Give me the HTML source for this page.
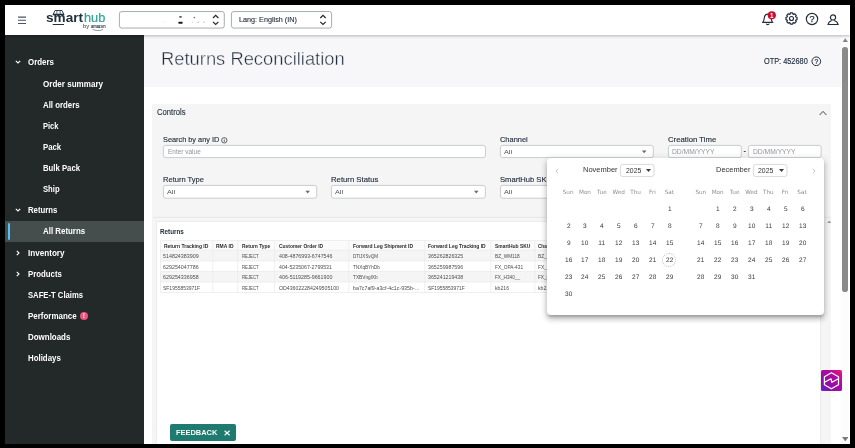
<!DOCTYPE html>
<html lang="en">
<head>
<meta charset="utf-8">
<title>Returns Reconciliation</title>
<style>
*{box-sizing:border-box;margin:0;padding:0}
html,body{width:855px;height:448px;overflow:hidden;background:#000}
body{font-family:"Liberation Sans",sans-serif;color:#232f3e;position:relative}
.a{position:absolute}
.t{position:absolute;white-space:nowrap;line-height:12px;height:12px}
#app{left:0;top:0;width:855px;height:448px;background:#fff;overflow:hidden;filter:opacity(1)}
#hdr{left:5px;top:5px;width:845px;height:29.5px;background:#fff;box-shadow:0 1px 3px rgba(0,0,0,.28);z-index:20}
#side{left:5px;top:34px;width:138.8px;height:410px;background:#232829}
#selrow{left:5px;top:221px;width:139px;height:21px;background:#454d4d}
#selbar{left:7.5px;top:223px;width:2.2px;height:17px;background:#4fc3f7;border-radius:1px}
#band{left:144px;top:34px;width:697px;height:53px;background:#f7f7f9}
#ctl{left:152px;top:104px;width:679.2px;height:341px;background:#f5f5f5}
#ret{left:156px;top:221px;width:665.3px;height:230px;background:#fff;border:1px solid #ececec}
#pop{left:547px;top:158px;width:277px;height:156.5px;background:#fff;border-radius:4px;box-shadow:0 2.6px 2.6px -1.6px rgba(0,0,0,.2),0 4.2px 5.3px .5px rgba(0,0,0,.14),0 1.6px 7.4px 1px rgba(0,0,0,.12);z-index:10}
.dh{position:absolute;width:17px;text-align:center;font-size:5.7px;color:#8e8e8e;line-height:8px;height:8px;font-family:"DejaVu Sans","Liberation Sans",sans-serif}
.d{position:absolute;width:17px;text-align:center;font-size:6.5px;color:#3a3a3a;line-height:8px;height:8px;letter-spacing:.15px;transform:translate(.35px,0) rotate(.03deg)}
.fr{position:absolute;background:#000;z-index:100}
</style>
</head>
<body>
<div id="app" class="a">
<div id="side" class="a"></div>
<div id="selrow" class="a"></div><div id="selbar" class="a"></div>
<div class="t" style="left:28.3px;top:56.40px;font-size:8.5px;font-weight:bold;transform:scaleX(0.929);transform-origin:0 50%;color:#fff">Orders</div>
<svg class="a" style="left:14.5px;top:59.4px" width="6" height="6" viewBox="0 0 6 6"><path d="M0.8 1.8 L3 4 L5.2 1.8" fill="none" stroke="#fff" stroke-width="1.1"/></svg>
<div class="t" style="left:43.1px;top:77.50px;font-size:8.5px;font-weight:bold;transform:scaleX(0.948);transform-origin:0 50%;color:#fff">Order summary</div>
<div class="t" style="left:43.1px;top:98.50px;font-size:8.5px;font-weight:bold;transform:scaleX(0.922);transform-origin:0 50%;color:#fff">All orders</div>
<div class="t" style="left:43.1px;top:119.50px;font-size:8.5px;font-weight:bold;transform:scaleX(0.881);transform-origin:0 50%;color:#fff">Pick</div>
<div class="t" style="left:42.9px;top:140.60px;font-size:8.5px;font-weight:bold;transform:scaleX(0.917);transform-origin:0 50%;color:#fff">Pack</div>
<div class="t" style="left:42.9px;top:161.70px;font-size:8.5px;font-weight:bold;transform:scaleX(0.911);transform-origin:0 50%;color:#fff">Bulk Pack</div>
<div class="t" style="left:42.9px;top:182.80px;font-size:8.5px;font-weight:bold;transform:scaleX(0.901);transform-origin:0 50%;color:#fff">Ship</div>
<div class="t" style="left:28.2px;top:203.90px;font-size:8.5px;font-weight:bold;transform:scaleX(0.915);transform-origin:0 50%;color:#fff">Returns</div>
<svg class="a" style="left:14.5px;top:206.9px" width="6" height="6" viewBox="0 0 6 6"><path d="M0.8 1.8 L3 4 L5.2 1.8" fill="none" stroke="#fff" stroke-width="1.1"/></svg>
<div class="t" style="left:42.9px;top:225.20px;font-size:8.5px;font-weight:bold;transform:scaleX(0.929);transform-origin:0 50%;color:#fff">All Returns</div>
<div class="t" style="left:28.2px;top:246.70px;font-size:8.5px;font-weight:bold;transform:scaleX(0.954);transform-origin:0 50%;color:#fff">Inventory</div>
<svg class="a" style="left:15px;top:249.7px" width="6" height="6" viewBox="0 0 6 6"><path d="M1.8 0.8 L4 3 L1.8 5.2" fill="none" stroke="#fff" stroke-width="1.1"/></svg>
<div class="t" style="left:28.2px;top:267.80px;font-size:8.5px;font-weight:bold;transform:scaleX(0.920);transform-origin:0 50%;color:#fff">Products</div>
<svg class="a" style="left:15px;top:270.8px" width="6" height="6" viewBox="0 0 6 6"><path d="M1.8 0.8 L4 3 L1.8 5.2" fill="none" stroke="#fff" stroke-width="1.1"/></svg>
<div class="t" style="left:28.1px;top:289.00px;font-size:8.5px;font-weight:bold;transform:scaleX(0.903);transform-origin:0 50%;color:#fff">SAFE-T Claims</div>
<div class="t" style="left:28.2px;top:309.50px;font-size:8.5px;font-weight:bold;transform:scaleX(0.937);transform-origin:0 50%;color:#fff">Performance</div>
<div class="a" style="left:79.8px;top:311.6px;width:8.2px;height:8.2px;border-radius:50%;background:#f0527a;color:#fff;font-size:6.5px;font-weight:bold;line-height:8.2px;text-align:center">!</div>
<div class="t" style="left:28.2px;top:330.60px;font-size:8.5px;font-weight:bold;transform:scaleX(0.935);transform-origin:0 50%;color:#fff">Downloads</div>
<div class="t" style="left:28.2px;top:351.70px;font-size:8.5px;font-weight:bold;transform:scaleX(0.926);transform-origin:0 50%;color:#fff">Holidays</div>
<div id="band" class="a"></div>
<div class="t" style="left:160.7px;top:46.50px;font-size:18px;transform:scaleX(1.020);transform-origin:0 50%;color:#232f3e;-webkit-text-stroke:0.4px #f7f7f9;line-height:24px;height:24px">Returns Reconciliation</div>
<div class="t" style="left:764.2px;top:55.00px;font-size:8.7px;transform:scaleX(0.846);transform-origin:0 50%;color:#232f3e;-webkit-text-stroke:0.15px #232f3e">OTP: 452680</div>
<svg class="a" style="left:811.3px;top:55.5px" width="10.6" height="10.6" viewBox="0 0 10.6 10.6"><circle cx="5.3" cy="5.3" r="4.35" fill="none" stroke="#232f3e" stroke-width="1"/><text x="5.3" y="7.7" font-size="6.8" text-anchor="middle" fill="#232f3e" stroke="#232f3e" stroke-width="0.2" font-family="Liberation Sans, sans-serif">?</text></svg>
<div id="ctl" class="a"></div>
<div class="t" style="left:156.8px;top:106.80px;font-size:8.2px;transform:scaleX(0.937);transform-origin:0 50%;color:#232f3e;-webkit-text-stroke:0.1px #232f3e">Controls</div>
<svg class="a" style="left:819.2px;top:110.2px" width="8" height="6" viewBox="0 0 8 6"><path d="M0.6 5 L4 1.4 L7.4 5" fill="none" stroke="#333" stroke-width="0.9"/></svg>
<div class="t" style="left:163.2px;top:134.10px;font-size:8px;transform:scaleX(0.917);transform-origin:0 50%;color:#232f3e;-webkit-text-stroke:0.14px #232f3e">Search by any ID</div>
<svg class="a" style="left:221.1px;top:137.1px" width="6.6" height="6.6" viewBox="0 0 6.6 6.6"><circle cx="3.3" cy="3.3" r="2.7" fill="none" stroke="#333" stroke-width="0.75"/><path d="M3.3 2.9 V4.8" stroke="#333" stroke-width="0.8"/><circle cx="3.3" cy="1.9" r="0.45" fill="#333"/></svg>
<svg class="a" style="left:161.7px;top:144px;" width="324.9" height="15.0" viewBox="0 0 324.9 15.0"><rect x="1.4" y="1.4" width="322.1" height="12.2" rx="2.2" fill="#fff" stroke="#bcc1c5" stroke-width="0.8"/></svg>
<div class="t" style="left:167.6px;top:145.80px;font-size:6.7px;transform:scaleX(0.968);transform-origin:0 50%;color:#8f969e">Enter value</div>
<div class="t" style="left:500.4px;top:134.10px;font-size:8px;transform:scaleX(0.929);transform-origin:0 50%;color:#232f3e;-webkit-text-stroke:0.14px #232f3e">Channel</div>
<svg class="a" style="left:498.8px;top:144px;" width="155.7" height="15.0" viewBox="0 0 155.7 15.0"><rect x="1.4" y="1.4" width="152.9" height="12.2" rx="2.2" fill="#fff" stroke="#bcc1c5" stroke-width="0.8"/><path d="M142.9 6.4 H147.5 L145.2 9.2Z" fill="#6a6a6a"/></svg>
<div class="t" style="left:504.3px;top:145.80px;font-size:6.1px;transform:scaleX(1.195);transform-origin:0 50%;color:#4a4f55">All</div>
<div class="t" style="left:668px;top:134.10px;font-size:8px;transform:scaleX(0.968);transform-origin:0 50%;color:#232f3e;-webkit-text-stroke:0.14px #232f3e">Creation Time</div>
<svg class="a" style="left:666.8px;top:144px;" width="75.7" height="15.0" viewBox="0 0 75.7 15.0"><rect x="1.4" y="1.4" width="72.9" height="12.2" rx="2.2" fill="#fff" stroke="#bcc1c5" stroke-width="0.8"/></svg>
<div class="t" style="left:672.4px;top:145.80px;font-size:6.6px;transform:scaleX(1.019);transform-origin:0 50%;color:#8f969e">DD/MM/YYYY</div>
<div class="t " style="left:743.5px;top:144.90px;font-size:7.5px;font-weight:bold;color:#333">-</div>
<svg class="a" style="left:747.4px;top:144px;" width="75.5" height="15.0" viewBox="0 0 75.5 15.0"><rect x="1.4" y="1.4" width="72.7" height="12.2" rx="2.2" fill="#fff" stroke="#bcc1c5" stroke-width="0.8"/></svg>
<div class="t" style="left:753px;top:145.80px;font-size:6.6px;transform:scaleX(1.019);transform-origin:0 50%;color:#8f969e">DD/MM/YYYY</div>
<div class="t" style="left:163.2px;top:174.40px;font-size:8px;transform:scaleX(0.942);transform-origin:0 50%;color:#232f3e;-webkit-text-stroke:0.14px #232f3e">Return Type</div>
<svg class="a" style="left:161.7px;top:184px;" width="156.2" height="15.6" viewBox="0 0 156.2 15.6"><rect x="1.4" y="1.4" width="153.4" height="12.8" rx="2.2" fill="#fff" stroke="#bcc1c5" stroke-width="0.8"/><path d="M143.4 6.7 H148.0 L145.7 9.5Z" fill="#6a6a6a"/></svg>
<div class="t" style="left:167px;top:186.40px;font-size:6.1px;transform:scaleX(1.195);transform-origin:0 50%;color:#4a4f55">All</div>
<div class="t" style="left:331.4px;top:174.40px;font-size:8px;transform:scaleX(0.967);transform-origin:0 50%;color:#232f3e;-webkit-text-stroke:0.14px #232f3e">Return Status</div>
<svg class="a" style="left:329.8px;top:184px;" width="156.8" height="15.6" viewBox="0 0 156.8 15.6"><rect x="1.4" y="1.4" width="154.0" height="12.8" rx="2.2" fill="#fff" stroke="#bcc1c5" stroke-width="0.8"/><path d="M144.0 6.7 H148.6 L146.3 9.5Z" fill="#6a6a6a"/></svg>
<div class="t" style="left:335.2px;top:186.40px;font-size:6.1px;transform:scaleX(1.195);transform-origin:0 50%;color:#4a4f55">All</div>
<div class="t" style="left:500.4px;top:174.40px;font-size:8px;transform:scaleX(0.951);transform-origin:0 50%;color:#232f3e;-webkit-text-stroke:0.14px #232f3e">SmartHub SKU</div>
<svg class="a" style="left:498.8px;top:184px;" width="155.7" height="15.6" viewBox="0 0 155.7 15.6"><rect x="1.4" y="1.4" width="152.9" height="12.8" rx="2.2" fill="#fff" stroke="#bcc1c5" stroke-width="0.8"/><path d="M142.9 6.7 H147.5 L145.2 9.5Z" fill="#6a6a6a"/></svg>
<div class="t" style="left:504.3px;top:186.40px;font-size:6.1px;transform:scaleX(1.195);transform-origin:0 50%;color:#4a4f55">All</div>
<svg class="a" style="left:152.6px;top:216px" width="678.6" height="3" viewBox="0 0 678.6 3"><path d="M0 1.4 H678.6" stroke="#e4e4e4" stroke-width="0.8"/></svg>
<div id="ret" class="a"></div>
<div class="t" style="left:160px;top:225.50px;font-size:6.6px;font-weight:bold;transform:scaleX(0.958);transform-origin:0 50%;color:#232f3e">Returns</div>
<svg class="a" style="left:826.5px;top:219.5px" width="4.4" height="3.4" viewBox="0 0 4.4 3.4"><path d="M0 3.4 L2.2 0.4 L4.4 3.4Z" fill="#9a9a9a"/></svg>
<svg class="a" style="left:159.8px;top:240.4px" width="440.7" height="53.0" viewBox="0 0 440.7 53.0"><rect x="0.5" y="0.5" width="439.7" height="9.8" fill="#fbfbfb"/><rect x="0.5" y="10.3" width="439.7" height="10.6" fill="#f5f5f5"/><rect x="0.5" y="31.5" width="439.7" height="10.5" fill="#f5f5f5"/><path d="M0.5 0.5 H440.2" stroke="#ebebeb" stroke-width="0.8"/><path d="M0.5 10.3 H440.2" stroke="#ebebeb" stroke-width="0.8"/><path d="M0.5 20.9 H440.2" stroke="#ebebeb" stroke-width="0.8"/><path d="M0.5 31.5 H440.2" stroke="#ebebeb" stroke-width="0.8"/><path d="M0.5 42.0 H440.2" stroke="#ebebeb" stroke-width="0.8"/><path d="M0.5 52.5 H440.2" stroke="#ebebeb" stroke-width="0.8"/><path d="M0.5 0.5 V52.5" stroke="#ebebeb" stroke-width="0.8"/><path d="M52.8 0.5 V52.5" stroke="#ebebeb" stroke-width="0.8"/><path d="M77.7 0.5 V52.5" stroke="#ebebeb" stroke-width="0.8"/><path d="M114.6 0.5 V52.5" stroke="#ebebeb" stroke-width="0.8"/><path d="M188.8 0.5 V52.5" stroke="#ebebeb" stroke-width="0.8"/><path d="M264.7 0.5 V52.5" stroke="#ebebeb" stroke-width="0.8"/><path d="M330.9 0.5 V52.5" stroke="#ebebeb" stroke-width="0.8"/><path d="M374.9 0.5 V52.5" stroke="#ebebeb" stroke-width="0.8"/><path d="M440.2 0.5 V52.5" stroke="#ebebeb" stroke-width="0.8"/></svg>
<div class="t" style="left:163.8px;top:239.80px;font-size:5.4px;font-weight:bold;transform:scaleX(0.925);transform-origin:0 50%;color:#2b2b2b">Return Tracking ID</div>
<div class="t" style="left:215.8px;top:239.80px;font-size:5.4px;font-weight:bold;transform:scaleX(0.921);transform-origin:0 50%;color:#2b2b2b">RMA ID</div>
<div class="t" style="left:241.7px;top:239.80px;font-size:5.4px;font-weight:bold;transform:scaleX(0.913);transform-origin:0 50%;color:#2b2b2b">Return Type</div>
<div class="t" style="left:278.8px;top:239.80px;font-size:5.4px;font-weight:bold;transform:scaleX(0.915);transform-origin:0 50%;color:#2b2b2b">Customer Order ID</div>
<div class="t" style="left:352.9px;top:239.80px;font-size:5.4px;font-weight:bold;transform:scaleX(0.920);transform-origin:0 50%;color:#2b2b2b">Forward Leg Shipment ID</div>
<div class="t" style="left:428.2px;top:239.80px;font-size:5.4px;font-weight:bold;transform:scaleX(0.917);transform-origin:0 50%;color:#2b2b2b">Forward Leg Tracking ID</div>
<div class="t" style="left:494.5px;top:239.80px;font-size:5.4px;font-weight:bold;transform:scaleX(0.917);transform-origin:0 50%;color:#2b2b2b">SmartHub SKU</div>
<div class="t" style="left:538.2px;top:239.80px;font-size:5.4px;font-weight:bold;transform:scaleX(0.857);transform-origin:0 50%;color:#2b2b2b">Channel SKU</div>
<div class="t" style="left:163.4px;top:250.10px;font-size:5.4px;transform:scaleX(0.991);transform-origin:0 50%;color:#4d4d4d">514824383909</div>
<div class="t" style="left:241.7px;top:250.10px;font-size:5.4px;transform:scaleX(0.795);transform-origin:0 50%;color:#4d4d4d">REJECT</div>
<div class="t" style="left:278.8px;top:250.10px;font-size:5.4px;transform:scaleX(0.979);transform-origin:0 50%;color:#4d4d4d">408-4876993-6747546</div>
<div class="t" style="left:352.9px;top:250.10px;font-size:5.4px;transform:scaleX(0.845);transform-origin:0 50%;color:#4d4d4d">DTlJXSvQM</div>
<div class="t" style="left:428.2px;top:250.10px;font-size:5.4px;transform:scaleX(0.977);transform-origin:0 50%;color:#4d4d4d">365262826325</div>
<div class="t" style="left:494.5px;top:250.10px;font-size:5.4px;transform:scaleX(0.879);transform-origin:0 50%;color:#4d4d4d">BZ_WM118</div>
<div class="t" style="left:538.2px;top:250.10px;font-size:5.4px;transform:scaleX(0.879);transform-origin:0 50%;color:#4d4d4d">BZ_WM118</div>
<div class="t" style="left:163.4px;top:260.60px;font-size:5.4px;transform:scaleX(0.991);transform-origin:0 50%;color:#4d4d4d">629254047786</div>
<div class="t" style="left:241.7px;top:260.60px;font-size:5.4px;transform:scaleX(0.795);transform-origin:0 50%;color:#4d4d4d">REJECT</div>
<div class="t" style="left:278.8px;top:260.60px;font-size:5.4px;transform:scaleX(0.970);transform-origin:0 50%;color:#4d4d4d">404-5235067-2799531</div>
<div class="t" style="left:352.9px;top:260.60px;font-size:5.4px;transform:scaleX(0.870);transform-origin:0 50%;color:#4d4d4d">TNXqBYhDb</div>
<div class="t" style="left:428.2px;top:260.60px;font-size:5.4px;transform:scaleX(0.977);transform-origin:0 50%;color:#4d4d4d">365259987596</div>
<div class="t" style="left:494.5px;top:260.60px;font-size:5.4px;transform:scaleX(0.886);transform-origin:0 50%;color:#4d4d4d">FX_OPA-431</div>
<div class="t" style="left:538.2px;top:260.60px;font-size:5.4px;transform:scaleX(0.886);transform-origin:0 50%;color:#4d4d4d">FX_OPA-431</div>
<div class="t" style="left:163.4px;top:271.20px;font-size:5.4px;transform:scaleX(0.991);transform-origin:0 50%;color:#4d4d4d">629254336958</div>
<div class="t" style="left:241.7px;top:271.20px;font-size:5.4px;transform:scaleX(0.795);transform-origin:0 50%;color:#4d4d4d">REJECT</div>
<div class="t" style="left:278.8px;top:271.20px;font-size:5.4px;transform:scaleX(0.986);transform-origin:0 50%;color:#4d4d4d">406-5119285-9661900</div>
<div class="t" style="left:352.9px;top:271.20px;font-size:5.4px;transform:scaleX(0.885);transform-origin:0 50%;color:#4d4d4d">TXBVnglXb</div>
<div class="t" style="left:428.2px;top:271.20px;font-size:5.4px;transform:scaleX(0.977);transform-origin:0 50%;color:#4d4d4d">365241219438</div>
<div class="t" style="left:494.5px;top:271.20px;font-size:5.4px;transform:scaleX(0.871);transform-origin:0 50%;color:#4d4d4d">FX_H340__</div>
<div class="t" style="left:538.2px;top:271.20px;font-size:5.4px;transform:scaleX(0.871);transform-origin:0 50%;color:#4d4d4d">FX_H340__</div>
<div class="t" style="left:163.4px;top:281.80px;font-size:5.4px;transform:scaleX(0.925);transform-origin:0 50%;color:#4d4d4d">SF1955853971F</div>
<div class="t" style="left:241.7px;top:281.80px;font-size:5.4px;transform:scaleX(0.795);transform-origin:0 50%;color:#4d4d4d">REJECT</div>
<div class="t" style="left:278.8px;top:281.80px;font-size:5.4px;transform:scaleX(0.967);transform-origin:0 50%;color:#4d4d4d">OD436022284249505100</div>
<div class="t" style="left:352.9px;top:281.80px;font-size:5.4px;transform:scaleX(0.980);transform-origin:0 50%;color:#4d4d4d">ba7c7af9-a3cf-4c1c-935b-...</div>
<div class="t" style="left:428.2px;top:281.80px;font-size:5.4px;transform:scaleX(0.915);transform-origin:0 50%;color:#4d4d4d">SF1955853971F</div>
<div class="t" style="left:494.5px;top:281.80px;font-size:5.4px;transform:scaleX(0.958);transform-origin:0 50%;color:#4d4d4d">kb216</div>
<div class="t" style="left:538.2px;top:281.80px;font-size:5.4px;transform:scaleX(0.958);transform-origin:0 50%;color:#4d4d4d">kb216</div>
<div class="a" style="left:170.3px;top:424.3px;width:66.1px;height:16.8px;background:#1f7a6f;border-radius:2px;z-index:5"></div>
<div class="t" style="left:176px;top:426.90px;font-size:7.6px;font-weight:bold;transform:scaleX(0.980);transform-origin:0 50%;color:#fff;z-index:6">FEEDBACK</div>
<svg class="a" style="left:224.3px;top:430.3px;z-index:6" width="6.2" height="6" viewBox="0 0 6.2 6"><path d="M0.6 0.7 L5.6 5.3 M5.6 0.7 L0.6 5.3" stroke="#fff" stroke-width="1.15" fill="none"/></svg>
<svg class="a" style="left:821px;top:370px;z-index:17" width="21" height="21" viewBox="0 0 21 21"><defs><linearGradient id="pg" x1="0" y1="1" x2="1" y2="0"><stop offset="0" stop-color="#6420d8"/><stop offset="0.25" stop-color="#8a10a8"/><stop offset="0.65" stop-color="#b00aa0"/><stop offset="0.88" stop-color="#d8108a"/><stop offset="1" stop-color="#f02858"/></linearGradient></defs><rect width="21" height="21" rx="1.6" fill="url(#pg)"/><path d="M10.4 2.8 L17.5 6.8 L17.5 14.8 L10.4 18.8 L3.4 14.8 L3.4 6.8 Z" fill="none" stroke="#fff" stroke-width="1.25" stroke-linejoin="round"/><path d="M3.5 12.3 L10 8.8 L10.9 12.3 L17.4 8.8" fill="none" stroke="#fff" stroke-width="1.25" stroke-linejoin="round"/></svg>
<div id="pop" class="a"></div>
<svg class="a" style="left:554.6px;top:167.8px;z-index:11;" width="4" height="6" viewBox="0 0 4 6"><path d="M3 0.8 L1 3 L3 5.2" fill="none" stroke="#aaa" stroke-width="0.7"/></svg>
<svg class="a" style="left:811.5px;top:168px;z-index:11;" width="4" height="6" viewBox="0 0 4 6"><path d="M1 0.8 L3 3 L1 5.2" fill="none" stroke="#aaa" stroke-width="0.7"/></svg>
<div class="t" style="left:583.1px;top:164.30px;font-size:7.8px;transform:scaleX(0.962);transform-origin:0 50%;color:#333;z-index:11;">November</div>
<svg class="a" style="left:619.3px;top:163.3px;z-index:11;" width="36.4" height="15.0" viewBox="0 0 36.4 15.0"><rect x="1.4" y="1.4" width="33.6" height="12.2" rx="2.4" fill="#fff" stroke="#cfcfcf" stroke-width="0.8"/></svg>
<div class="t" style="left:625.6999999999999px;top:164.90px;font-size:6.9px;transform:scaleX(0.997);transform-origin:0 50%;color:#333;z-index:11;">2025</div>
<svg class="a" style="left:646.1px;top:169.2px;z-index:11;" width="5" height="3" viewBox="0 0 5 3"><path d="M0 0 H5 L2.5 2.9Z" fill="#3a3a3a"/></svg>
<div class="t" style="left:716.4px;top:164.30px;font-size:7.8px;transform:scaleX(0.956);transform-origin:0 50%;color:#333;z-index:11;">December</div>
<svg class="a" style="left:752px;top:163.3px;z-index:11;" width="36.4" height="15.0" viewBox="0 0 36.4 15.0"><rect x="1.4" y="1.4" width="33.6" height="12.2" rx="2.4" fill="#fff" stroke="#cfcfcf" stroke-width="0.8"/></svg>
<div class="t" style="left:758.4px;top:164.90px;font-size:6.9px;transform:scaleX(0.997);transform-origin:0 50%;color:#333;z-index:11;">2025</div>
<svg class="a" style="left:778.8px;top:169.2px;z-index:11;" width="5" height="3" viewBox="0 0 5 3"><path d="M0 0 H5 L2.5 2.9Z" fill="#3a3a3a"/></svg>
<div class="dh" style="left:559.60px;top:188.00px;z-index:11;">Sun</div>
<div class="dh" style="left:576.47px;top:188.00px;z-index:11;">Mon</div>
<div class="dh" style="left:593.34px;top:188.00px;z-index:11;">Tue</div>
<div class="dh" style="left:610.21px;top:188.00px;z-index:11;">Wed</div>
<div class="dh" style="left:627.08px;top:188.00px;z-index:11;">Thu</div>
<div class="dh" style="left:643.95px;top:188.00px;z-index:11;">Fri</div>
<div class="dh" style="left:660.82px;top:188.00px;z-index:11;">Sat</div>
<div class="d" style="left:660.82px;top:205.30px;z-index:11;">1</div>
<div class="d" style="left:559.60px;top:222.00px;z-index:11;">2</div>
<div class="d" style="left:576.47px;top:222.00px;z-index:11;">3</div>
<div class="d" style="left:593.34px;top:222.00px;z-index:11;">4</div>
<div class="d" style="left:610.21px;top:222.00px;z-index:11;">5</div>
<div class="d" style="left:627.08px;top:222.00px;z-index:11;">6</div>
<div class="d" style="left:643.95px;top:222.00px;z-index:11;">7</div>
<div class="d" style="left:660.82px;top:222.00px;z-index:11;">8</div>
<div class="d" style="left:559.60px;top:238.90px;z-index:11;">9</div>
<div class="d" style="left:576.47px;top:238.90px;z-index:11;">10</div>
<div class="d" style="left:593.34px;top:238.90px;z-index:11;">11</div>
<div class="d" style="left:610.21px;top:238.90px;z-index:11;">12</div>
<div class="d" style="left:627.08px;top:238.90px;z-index:11;">13</div>
<div class="d" style="left:643.95px;top:238.90px;z-index:11;">14</div>
<div class="d" style="left:660.82px;top:238.90px;z-index:11;">15</div>
<div class="d" style="left:559.60px;top:255.70px;z-index:11;">16</div>
<div class="d" style="left:576.47px;top:255.70px;z-index:11;">17</div>
<div class="d" style="left:593.34px;top:255.70px;z-index:11;">18</div>
<div class="d" style="left:610.21px;top:255.70px;z-index:11;">19</div>
<div class="d" style="left:627.08px;top:255.70px;z-index:11;">20</div>
<div class="d" style="left:643.95px;top:255.70px;z-index:11;">21</div>
<div class="d" style="left:660.82px;top:255.70px;z-index:11;">22</div>
<div class="d" style="left:559.60px;top:272.60px;z-index:11;">23</div>
<div class="d" style="left:576.47px;top:272.60px;z-index:11;">24</div>
<div class="d" style="left:593.34px;top:272.60px;z-index:11;">25</div>
<div class="d" style="left:610.21px;top:272.60px;z-index:11;">26</div>
<div class="d" style="left:627.08px;top:272.60px;z-index:11;">27</div>
<div class="d" style="left:643.95px;top:272.60px;z-index:11;">28</div>
<div class="d" style="left:660.82px;top:272.60px;z-index:11;">29</div>
<div class="d" style="left:559.60px;top:289.50px;z-index:11;">30</div>
<div class="dh" style="left:692.30px;top:188.00px;z-index:11;">Sun</div>
<div class="dh" style="left:709.17px;top:188.00px;z-index:11;">Mon</div>
<div class="dh" style="left:726.04px;top:188.00px;z-index:11;">Tue</div>
<div class="dh" style="left:742.91px;top:188.00px;z-index:11;">Wed</div>
<div class="dh" style="left:759.78px;top:188.00px;z-index:11;">Thu</div>
<div class="dh" style="left:776.65px;top:188.00px;z-index:11;">Fri</div>
<div class="dh" style="left:793.52px;top:188.00px;z-index:11;">Sat</div>
<div class="d" style="left:709.17px;top:205.30px;z-index:11;">1</div>
<div class="d" style="left:726.04px;top:205.30px;z-index:11;">2</div>
<div class="d" style="left:742.91px;top:205.30px;z-index:11;">3</div>
<div class="d" style="left:759.78px;top:205.30px;z-index:11;">4</div>
<div class="d" style="left:776.65px;top:205.30px;z-index:11;">5</div>
<div class="d" style="left:793.52px;top:205.30px;z-index:11;">6</div>
<div class="d" style="left:692.30px;top:222.00px;z-index:11;">7</div>
<div class="d" style="left:709.17px;top:222.00px;z-index:11;">8</div>
<div class="d" style="left:726.04px;top:222.00px;z-index:11;">9</div>
<div class="d" style="left:742.91px;top:222.00px;z-index:11;">10</div>
<div class="d" style="left:759.78px;top:222.00px;z-index:11;">11</div>
<div class="d" style="left:776.65px;top:222.00px;z-index:11;">12</div>
<div class="d" style="left:793.52px;top:222.00px;z-index:11;">13</div>
<div class="d" style="left:692.30px;top:238.90px;z-index:11;">14</div>
<div class="d" style="left:709.17px;top:238.90px;z-index:11;">15</div>
<div class="d" style="left:726.04px;top:238.90px;z-index:11;">16</div>
<div class="d" style="left:742.91px;top:238.90px;z-index:11;">17</div>
<div class="d" style="left:759.78px;top:238.90px;z-index:11;">18</div>
<div class="d" style="left:776.65px;top:238.90px;z-index:11;">19</div>
<div class="d" style="left:793.52px;top:238.90px;z-index:11;">20</div>
<div class="d" style="left:692.30px;top:255.70px;z-index:11;">21</div>
<div class="d" style="left:709.17px;top:255.70px;z-index:11;">22</div>
<div class="d" style="left:726.04px;top:255.70px;z-index:11;">23</div>
<div class="d" style="left:742.91px;top:255.70px;z-index:11;">24</div>
<div class="d" style="left:759.78px;top:255.70px;z-index:11;">25</div>
<div class="d" style="left:776.65px;top:255.70px;z-index:11;">26</div>
<div class="d" style="left:793.52px;top:255.70px;z-index:11;">27</div>
<div class="d" style="left:692.30px;top:272.60px;z-index:11;">28</div>
<div class="d" style="left:709.17px;top:272.60px;z-index:11;">29</div>
<div class="d" style="left:726.04px;top:272.60px;z-index:11;">30</div>
<div class="d" style="left:742.91px;top:272.60px;z-index:11;">31</div>
<div class="a" style="left:662.1px;top:252.8px;width:14px;height:14px;border:0.8px dotted #bdbdbd;border-radius:50%;z-index:11;"></div>
<div class="a" style="left:840.8px;top:34px;width:9.2px;height:410px;background:#fcfcfc;z-index:15"></div>
<div class="a" style="left:842.3px;top:46.7px;width:5.5px;height:245.6px;background:#8a8a8a;border-radius:2.8px;z-index:16"></div>
<svg class="a" style="left:841.6px;top:37.6px;z-index:16" width="6.6" height="4.8" viewBox="0 0 6.6 4.8"><path d="M0 4.8 L3.3 0.3 L6.6 4.8Z" fill="#858585"/></svg>
<svg class="a" style="left:841.5px;top:436.8px;z-index:16" width="6.6" height="4.6" viewBox="0 0 6.6 4.6"><path d="M0 0 L3.3 4.4 L6.6 0Z" fill="#7a7a7a"/></svg>
<div id="hdr" class="a"></div>
<svg class="a" style="left:17.5px;top:15.5px;z-index:21;" width="8.4" height="9" viewBox="0 0 8.4 9"><path d="M0 1.1 H8.4 M0 4.3 H8.4 M0 7.5 H8.4" stroke="#4a5563" stroke-width="1.1"/></svg>
<div class="t" style="left:46.4px;top:9.71px;font-size:12.1px;line-height:16px;height:16px;font-weight:bold;transform:scaleX(1.123);transform-origin:0 50%;color:#232f3e;z-index:21;">smart</div>
<div class="t" style="left:83.9px;top:9.71px;font-size:12.1px;line-height:16px;height:16px;transform:scaleX(1.055);transform-origin:0 50%;color:#2ea598;-webkit-text-stroke:0.2px #2ea598;z-index:21;">hub</div>
<svg class="a" style="left:52px;top:9px;z-index:21;" width="13" height="17" viewBox="0 0 13 17"><path d="M1.2 5.3 L3 1.5 H10 L11.8 5.3" fill="none" stroke="#232f3e" stroke-width="0.9" stroke-linejoin="round"/><path d="M0.8 4.7 H12.2 V6.3 H0.8Z" fill="#232f3e"/><path d="M5 1.8 L4.7 4.7 M8 1.8 L8.3 4.7" stroke="#232f3e" stroke-width="0.7"/><path d="M0.7 15.5 H12" stroke="#232f3e" stroke-width="1"/></svg>
<div class="t" style="left:83.4px;top:22.57px;font-size:4.7px;line-height:8px;height:8px;transform:scaleX(1.249);transform-origin:0 50%;color:#232f3e;z-index:21;">by</div>
<div class="t" style="left:90.6px;top:22.57px;font-size:4.7px;line-height:8px;height:8px;font-weight:bold;transform:scaleX(0.834);transform-origin:0 50%;color:#232f3e;z-index:21;">amazon</div>
<svg class="a" style="left:92px;top:28.9px;z-index:21;" width="12" height="2" viewBox="0 0 12 2"><path d="M0.5 0.3 C3.5 1.9 8 1.9 11 0.5" fill="none" stroke="#232f3e" stroke-width="0.5"/></svg>
<svg class="a" style="left:118px;top:10px;z-index:21;" width="107.7" height="20" viewBox="0 0 107.7 20"><rect x="1.4" y="1.55" width="104.9" height="16.5" rx="2.3" fill="#fff" stroke="#8f9898" stroke-width="0.8"/><path d="M95.0 8 L97.7 5.3 L100.4 8 M95.0 11.8 L97.7 14.5 L100.4 11.8" fill="none" stroke="#262626" stroke-width="1.2"/></svg>
<svg class="a" style="left:230.4px;top:10px;z-index:21;" width="103.0" height="20" viewBox="0 0 103.0 20"><rect x="1.4" y="1.55" width="100.2" height="16.5" rx="2.3" fill="#fff" stroke="#8f9898" stroke-width="0.8"/><path d="M90.3 8 L93.0 5.3 L95.7 8 M90.3 11.8 L93.0 14.5 L95.7 11.8" fill="none" stroke="#262626" stroke-width="1.2"/></svg>
<div class="t" style="left:238.8px;top:13.80px;font-size:7.8px;line-height:12px;height:12px;transform:scaleX(0.926);transform-origin:0 50%;color:#232f3e;-webkit-text-stroke:0.12px #232f3e;z-index:21;">Lang: English (IN)</div>
<svg class="a" style="left:160px;top:12px;z-index:21;" width="50" height="14" viewBox="0 0 50 14"><rect x="19.2" y="3.9" width="2.6" height="1.8" rx="0.6" fill="#555"/><rect x="18.5" y="9.8" width="4" height="1.9" rx="0.5" fill="#1a1a1a"/><circle cx="34.4" cy="5.6" r="0.8" fill="#666"/><circle cx="32.4" cy="10.2" r="0.7" fill="#d8d8d8"/><circle cx="38.1" cy="10.2" r="0.7" fill="#aaa"/><circle cx="44" cy="10.1" r="0.7" fill="#8a93b8"/><circle cx="4" cy="10.2" r="0.8" fill="#eee"/></svg>
<svg class="a" style="left:761px;top:10px;z-index:21;" width="16" height="17" viewBox="0 0 16 17"><path d="M1.6 12.4 C3.4 10.8 3 8.6 3.5 6.8 C4 4.9 5.4 4.1 6.7 4.1 C8 4.1 9.4 4.9 9.9 6.8 C10.4 8.6 10 10.8 11.8 12.4 Z" fill="none" stroke="#232f3e" stroke-width="1.2" stroke-linejoin="round"/><path d="M5.2 13.6 C5.6 14.9 7.8 14.9 8.2 13.6" fill="none" stroke="#232f3e" stroke-width="1.1"/><circle cx="10.8" cy="5.3" r="4.1" fill="#cf0a2c"/><text x="10.8" y="7.6" font-size="6.3" font-weight="bold" text-anchor="middle" fill="#fff" font-family="Liberation Sans, sans-serif">1</text></svg>
<svg class="a" style="left:784.7px;top:12.2px;z-index:21;" width="13" height="13" viewBox="0 0 13 13"><path d="M5.38 0.96 L7.62 0.96 L7.99 2.15 L8.52 2.37 L9.62 1.79 L11.21 3.38 L10.63 4.48 L10.85 5.01 L12.04 5.38 L12.04 7.62 L10.85 7.99 L10.63 8.52 L11.21 9.62 L9.62 11.21 L8.52 10.63 L7.99 10.85 L7.62 12.04 L5.38 12.04 L5.01 10.85 L4.48 10.63 L3.38 11.21 L1.79 9.62 L2.37 8.52 L2.15 7.99 L0.96 7.62 L0.96 5.38 L2.15 5.01 L2.37 4.48 L1.79 3.38 L3.38 1.79 L4.48 2.37 L5.01 2.15Z" fill="none" stroke="#232f3e" stroke-width="1.25" stroke-linejoin="round"/><circle cx="6.5" cy="6.5" r="2" fill="none" stroke="#232f3e" stroke-width="1.15"/></svg>
<svg class="a" style="left:805.2px;top:11.8px;z-index:21;" width="14" height="14" viewBox="0 0 14 14"><circle cx="7" cy="7" r="5.65" fill="none" stroke="#232f3e" stroke-width="1.15"/><text x="7" y="10.2" font-size="9" text-anchor="middle" fill="#232f3e" stroke="#232f3e" stroke-width="0.25" font-family="Liberation Sans, sans-serif">?</text></svg>
<svg class="a" style="left:827.4px;top:12.6px;z-index:21;" width="12.4" height="13" viewBox="0 0 12.4 13"><circle cx="6" cy="4.4" r="2.6" fill="none" stroke="#232f3e" stroke-width="1.2"/><path d="M1.3 11.5 C1.3 9.2 2.8 8.2 4.3 7.7 M7.7 7.7 C9.2 8.2 10.9 9.2 10.9 11.5 M0.9 11.5 H11.3" fill="none" stroke="#232f3e" stroke-width="1.2" stroke-linecap="round"/></svg>
<div class="fr" style="left:0;top:0;width:855px;height:5px"></div><div class="fr" style="left:0;top:0;width:5px;height:448px"></div><div class="fr" style="left:850px;top:0;width:5px;height:448px"></div><div class="fr" style="left:0;top:443.8px;width:855px;height:5px"></div>
</div>
</body>
</html>
